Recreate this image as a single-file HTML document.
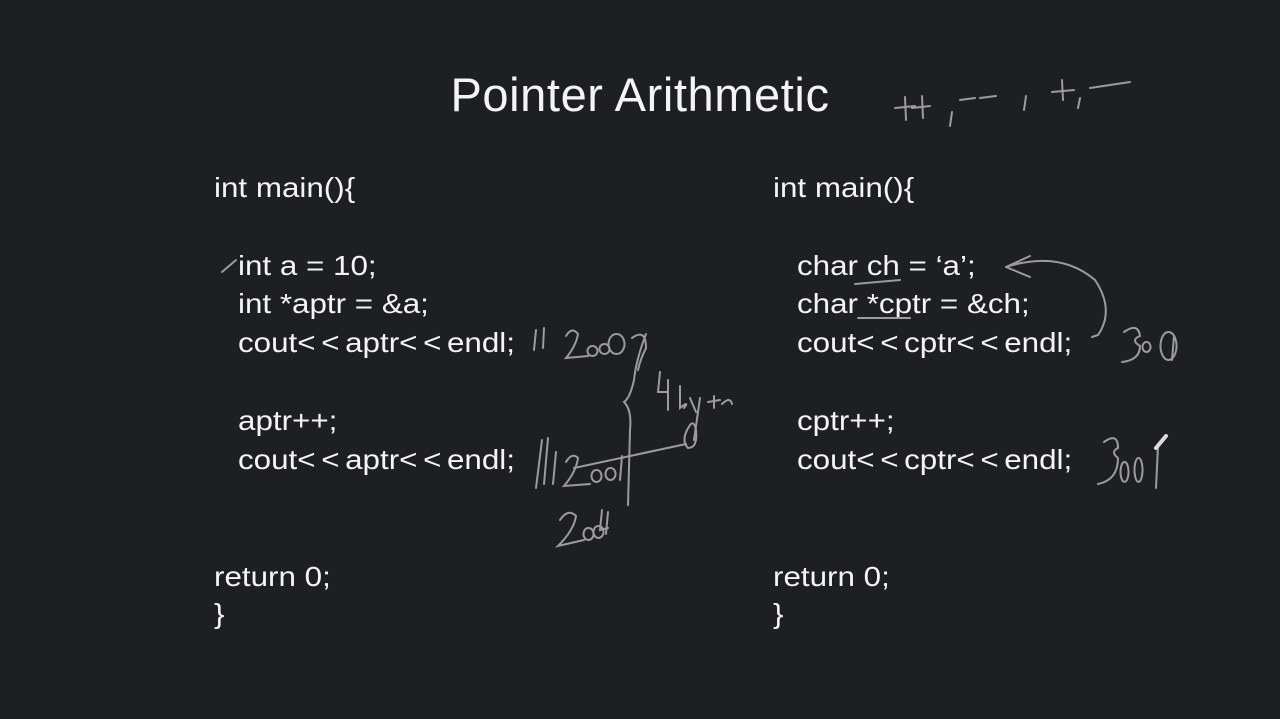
<!DOCTYPE html>
<html><head><meta charset="utf-8"><style>
html,body{margin:0;padding:0}
body{width:1280px;height:719px;background:#1d1f23;position:relative;overflow:hidden;font-family:"Liberation Sans",sans-serif;color:#f4f4f4}
.t{position:absolute;left:0;width:1280px;top:67px;text-align:center;font-size:47px;letter-spacing:0.6px}
.c{position:absolute;font-size:28px;white-space:pre;line-height:1;transform:scaleX(1.12);transform-origin:0 0}
.l{letter-spacing:5px}
svg{position:absolute;left:0;top:0}
</style></head><body>
<div class="t">Pointer Arithmetic</div>
<div class="c" style="left:214px;top:174px">int main(){</div>
<div class="c" style="left:238px;top:252px">int a = 10;</div>
<div class="c" style="left:238px;top:290px">int *aptr = &amp;a;</div>
<div class="c" style="left:238px;top:329px">cout<span class="l">&lt;&lt;</span>aptr<span class="l">&lt;&lt;</span>endl;</div>
<div class="c" style="left:238px;top:407px">aptr++;</div>
<div class="c" style="left:238px;top:446px">cout<span class="l">&lt;&lt;</span>aptr<span class="l">&lt;&lt;</span>endl;</div>
<div class="c" style="left:214px;top:563px">return 0;</div>
<div class="c" style="left:214px;top:600px">}</div>
<div class="c" style="left:773px;top:174px">int main(){</div>
<div class="c" style="left:797px;top:252px">char ch = ‘a’;</div>
<div class="c" style="left:797px;top:290px">char *cptr = &amp;ch;</div>
<div class="c" style="left:797px;top:329px">cout<span class="l">&lt;&lt;</span>cptr<span class="l">&lt;&lt;</span>endl;</div>
<div class="c" style="left:797px;top:407px">cptr++;</div>
<div class="c" style="left:797px;top:446px">cout<span class="l">&lt;&lt;</span>cptr<span class="l">&lt;&lt;</span>endl;</div>
<div class="c" style="left:773px;top:563px">return 0;</div>
<div class="c" style="left:773px;top:600px">}</div>
<svg width="1280" height="719" fill="none" stroke="#9c9c9c" stroke-width="2" stroke-linecap="round">
<path d="M222 272 L236 260"/>
<path d="M895 108 L915 106 M905 97 L906 120 M912 108 L930 106 M922 96 L923 118 M952 112 L950 126 M960 100 L975 98 M980 98 L996 96 M1026 96 L1024 110 M1052 92 L1074 90 M1062 80 L1063 100 M1080 98 L1078 108 M1090 88 L1130 82"/>
<path d="M536 330 L534 350 M544 328 L543 348 M566 336 Q572 326 578 334 Q576 346 566 358 L588 356 M592 346 a5 5 0 1 0 1 0 M604 344 a5 5 0 1 0 1 0 M616 334 a8 10 0 1 0 1 0 M632 338 Q646 328 646 348 Q640 360 638 370"/>
<path d="M646 334 Q636 360 634 380 Q630 398 624 402 Q632 410 630 430 L628 505"/>
<path d="M660 372 L658 392 L668 392 M668 380 L668 410 M680 386 L680 408 Q690 400 684 408 M690 398 L696 412 M700 398 L694 440 M708 402 L720 400 M714 396 L714 408 M722 404 Q730 396 732 404"/>
<path d="M690 425 Q680 440 688 448 Q698 448 696 430 Q694 420 690 425"/>
<path d="M574 468 L686 444"/>
<path d="M542 440 L536 488 M548 438 L544 484 M556 452 L553 484 M566 462 Q572 452 578 458 Q576 472 564 486 L590 484 M596 470 a5 6 0 1 0 1 0 M610 468 a5 6 0 1 0 1 0 M622 456 L620 480"/>
<path d="M560 520 Q568 508 576 516 Q574 530 558 546 L584 540 M588 528 a5 6 0 1 0 1 0 M598 526 a5 6 0 1 0 1 0 M602 510 L600 530 L608 528 M608 512 L606 534"/>
<path d="M855 284 L900 280 M858 318 L910 318"/>
<path d="M1006 267 Q1060 250 1095 280 Q1115 310 1098 335 L1092 337 M1006 267 L1030 256 M1006 267 L1030 277"/>
<path d="M1124 332 Q1138 322 1140 336 Q1130 340 1140 346 Q1140 360 1122 362 M1146 342 a4 5 0 1 0 1 0 M1168 332 a8 14 0 1 0 1 0 M1174 336 L1172 360"/>
<path d="M1104 442 Q1118 432 1118 448 Q1110 452 1118 458 Q1118 480 1098 484 M1124 462 a4 10 0 1 0 1 0 M1138 458 a4 12 0 1 0 1 0 M1158 446 L1156 488"/>
<path d="M1156 448 L1166 436" stroke="#ddd" stroke-width="4"/>
</svg>
</body></html>
